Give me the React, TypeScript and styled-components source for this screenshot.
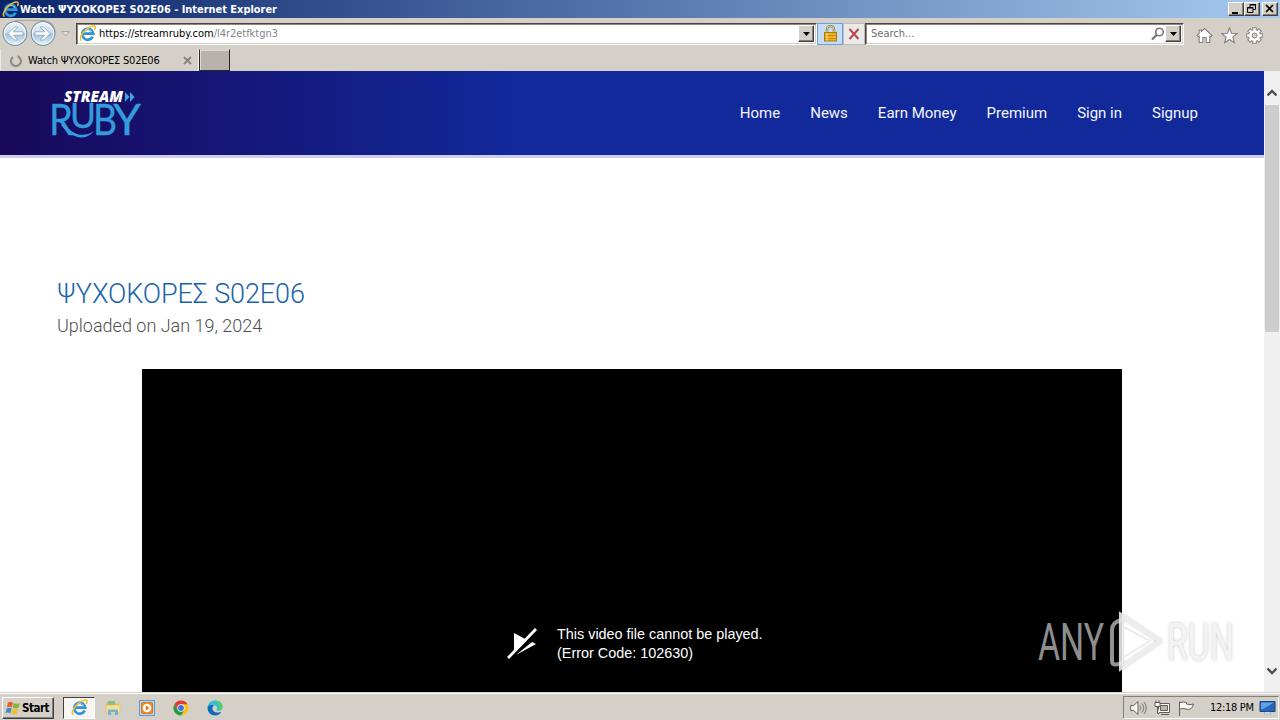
import {useId} from "react";
import styled, {createGlobalStyle, css} from "styled-components";

const navItems = ['Home', 'News', 'Earn Money', 'Premium', 'Sign in', 'Signup']
const title = 'ΨΥΧΟΚΟΡΕΣ S02E06'

const GlobalStyle = createGlobalStyle`
    * {
        box-sizing: border-box;
    }

    body {
        margin: 0;
        overflow: hidden;
    }

    svg {
        display: block;
        flex: none;
    }
`

const raised = css`
    background: #d4d0c8;
    border: 1px solid;
    border-color: #fff #404040 #404040 #fff;
    box-shadow: inset -1px -1px 0 #808080;
`

const Desktop = styled.div`
    position: relative;
    display: flex;
    flex-direction: column;
    width: 1280px;
    height: 720px;
    overflow: hidden;
    background: #d4d0c8;
    color: #000;
    font-family: "DejaVu Sans Condensed", "DejaVu Sans", sans-serif;
    font-size: 11px;
    white-space: nowrap;
`

const TitleBar = styled.div`
    display: flex;
    align-items: center;
    height: 18px;
    padding: 0 2px;
    background: linear-gradient(90deg, #0a246a, #a6caf0);
`

const Caption = styled.span`
    flex: 1;
    color: #fff;
    font-weight: bold;
`

const WindowButton = styled.div<{ $gap?: number }>`
    ${raised};
    width: 16px;
    height: 14px;
    margin-left: ${p => p.$gap ?? 0}px;
`

const Toolbar = styled.div`
    display: flex;
    align-items: center;
    height: 31px;
    padding: 0 7px 0 2px;
    background: #d4d0c8;
`

const Field = styled.div<{ $width: number }>`
    display: flex;
    align-items: center;
    width: ${p => p.$width}px;
    height: 22px;
    padding: 0 2px;
    background: #fff;
    border: 1px solid;
    border-color: #4a443c #fff #fff #4a443c;
    box-shadow: inset 1px 1px 0 #8c867e, inset -1px -1px 0 #d4d0c8;
`

const FieldText = styled.span<{ $muted?: boolean }>`
    flex: 1;
    padding-left: 3px;
    color: ${p => p.$muted ? '#6d6d6d' : '#000'};
    letter-spacing: ${p => p.$muted ? 0 : '-0.03px'};

    em {
        font-style: normal;
        color: #858585;
    }
`

const DropButton = styled.div`
    ${raised};
    display: flex;
    align-items: center;
    justify-content: center;
    width: 16px;
    height: 17px;
`

const SquareButton = styled.div<{ $active?: boolean, $width: number }>`
    display: flex;
    align-items: center;
    justify-content: center;
    width: ${p => p.$width}px;
    height: 22px;
    background: ${p => p.$active ? '#c4dcf6' : '#ebe8e8'};
    border: 1px solid ${p => p.$active ? '#6aa0dc' : '#bdb9b8'};
`

const Commands = styled.div`
    display: flex;
    align-items: center;
    gap: 8px;
    margin: 4px 0 0 12px;
`

const TabStrip = styled.div`
    display: flex;
    height: 22px;
`

const Tab = styled.div`
    display: flex;
    align-items: center;
    width: 199px;
    height: 22px;
    padding: 1px 6px 0 9px;
    border-left: 1px solid #eceae6;
    border-right: 1px solid #f4f2ee;

    span {
        flex: 1;
        padding-left: 6px;
        letter-spacing: -0.2px;
    }
`

const NewTab = styled.div`
    width: 31px;
    height: 22px;
    background: #b9b2ac;
    border: 1px solid #282420;
    border-top-color: #d4d0c8;
    box-shadow: inset 1px 1px 0 #dedad6;
`

const Viewport = styled.div`
    display: flex;
    height: 621px;
`

const Page = styled.main`
    width: 1264px;
    overflow: hidden;
    background: #fff;
    font-family: Roboto, sans-serif;
`

const SiteHeader = styled.header`
    display: flex;
    align-items: center;
    justify-content: space-between;
    height: 84px;
    padding: 0 66px 0 50px;
    background: linear-gradient(90deg, #180958 0, #16106a 120px, #12299c 520px, #12299c 100%);
    box-shadow: 0 3px 0 #cfcdec;
`

const SiteNav = styled.nav`
    display: flex;
    gap: 30px;
    color: #f4f6ff;
    font-size: 15px;
`

const Heading = styled.h1`
    height: 32px;
    margin: 123px 0 0 57px;
    color: #1763ab;
    font-size: 27px;
    font-weight: 300;
    line-height: 32px;
    letter-spacing: -0.1px;
`

const Uploaded = styled.p`
    height: 24px;
    margin: 4px 0 0 57px;
    color: #505050;
    font-size: 18px;
    font-weight: 300;
    line-height: 24px;
`

const Player = styled.div`
    display: flex;
    align-items: flex-start;
    width: 980px;
    height: 323px;
    margin: 31px 0 0 142px;
    padding: 256px 0 0 365px;
    background: #000;
    color: #fff;
    font: 14.4px/19px "Liberation Sans", Arial, sans-serif;

    svg {
        margin: 3px 20px 0 0;
    }
`

const ScrollBar = styled.div`
    display: flex;
    flex-direction: column;
    align-items: center;
    width: 16px;
    padding: 17px 0 16px;
    background: #f0f0f0;
`

const ScrollThumb = styled.div`
    width: 14px;
    height: 227px;
    margin: 7px 0 auto;
    background: #cdcdcd;
`

const Taskbar = styled.footer`
    display: flex;
    align-items: center;
    height: 28px;
    padding: 2px 1px 0 2px;
    background: #d4d0c8;
    border-top: 1px solid #d4d0c8;
    box-shadow: inset 0 1px 0 #fff;
`

const StartButton = styled.div`
    ${raised};
    display: flex;
    align-items: center;
    gap: 1px;
    width: 52px;
    height: 22px;
    padding-left: 2px;
    font-size: 11.5px;
    font-weight: bold;
    letter-spacing: -0.5px;
`

const TaskItem = styled.div<{ $active?: boolean }>`
    display: flex;
    align-items: center;
    justify-content: center;
    width: 32px;
    height: 22px;
    margin-right: 2px;
    ${p => p.$active && css`
        background: #f6f5f3;
        border: 1px solid;
        border-color: #404040 #fff #fff #404040;
    `}
`

const TaskItems = styled.div`
    display: flex;
    flex: 1;
    margin-left: 9px;
`

const Tray = styled.div`
    display: flex;
    align-items: center;
    width: 156px;
    height: 23px;
    padding: 0 2px 0 6px;
    border: 1px solid;
    border-color: #808080 #fff #fff #808080;
`

const Clock = styled.span`
    flex: 1;
    padding-left: 14px;
    letter-spacing: -0.3px;
`

const Watermark = styled.div`
    position: absolute;
    top: 608px;
    left: 1036px;
`

const IeIcon = ({size = 16}: { size?: number }) => (
  <svg width={size} height={size} viewBox="0 0 16 16" fill="none">
    <path d="M12.9 11a5.2 5.2 0 1 1 .5-2.8H4.2" stroke="#2f94d8" strokeWidth="2.6"/>
    <path d="M4.3 6.6a4.2 4.2 0 0 1 7.8 0" stroke="#8fd0f4" strokeWidth=".8"/>
    <path d="M2.2 14.6C-.2 13 2.6 7.6 7 4.1 11.2.7 15.2-.1 15.3 2.2c0 .8-.3 1.6-.8 2.5" stroke="#f2bd2c" strokeWidth="1.4"/>
  </svg>
)

const NavButtons = () => {
  const id = useId()
  return (
    <svg width="74" height="31" viewBox="0 0 74 31">
      <defs>
        <linearGradient id={id} x2="0" y2="1">
          <stop offset="0" stopColor="#eef5fa"/>
          <stop offset=".48" stopColor="#c9dcea"/>
          <stop offset=".52" stopColor="#9fc0da"/>
          <stop offset="1" stopColor="#e6f6fc"/>
        </linearGradient>
      </defs>
      <path d="M13 2.5h28a12 12 0 0 1 12 12" fill="none" stroke="#a8a7a6" strokeWidth="1.2"/>
      {[13, 41].map(x => (
        <g key={x}>
          <circle cx={x} cy="15.5" r="11.8" fill={`url(#${id})`} stroke="#7d94a8" strokeWidth="1.2"/>
          <circle cx={x} cy="15.5" r="10.7" fill="none" stroke="#f8fcff"/>
        </g>
      ))}
      <path d="M6 15.5l6.5-6.5h3.4l-4.7 4.8H21v3.4h-9.8l4.7 4.8h-3.4z" fill="#fff" stroke="#86a2b9" strokeWidth=".8"/>
      <path d="M48 15.5L41.500 9h-3.400l4.700 4.800H33v3.400h9.800l-4.700 4.800h3.400z" fill="#fff" stroke="#86a2b9" strokeWidth=".8"/>
      <path d="M59.500 13.500h8l-4 4.500z" fill="#e1ddd8" stroke="#aaa6a0"/>
    </svg>
  )
}

const DownArrow = () => (
  <svg width="7" height="4" viewBox="0 0 7 4"><path d="M0 0h7L3.500 4z"/></svg>
)

const LockIcon = () => (
  <svg width="15" height="17" viewBox="0 0 15 17">
    <path d="M4 8V4.500a3.500 3.500 0 0 1 7 0V8" fill="none" stroke="#8f7c3a" strokeWidth="2.400"/>
    <path d="M4 8V4.500a3.500 3.500 0 0 1 7 0V8" fill="none" stroke="#eadb9c"/>
    <rect x="1.500" y="7.500" width="12" height="8.500" fill="#eeb320" stroke="#a97a10"/>
    <path d="M2 10.500h11M2 13.500h11" stroke="#c68a10"/>
    <path d="M4 8.500v7" stroke="#fbe08a"/>
  </svg>
)

const StopIcon = () => (
  <svg width="12" height="12" viewBox="0 0 12 12">
    <path d="M1.500 1l9 10M10.500 1l-9 10" stroke="#b7474d" strokeWidth="2"/>
  </svg>
)

const SearchIcon = () => (
  <svg width="14" height="14" viewBox="0 0 14 14" fill="none" stroke="#77777b">
    <circle cx="8.500" cy="5" r="3.800" strokeWidth="1.600"/>
    <path d="M5.700 7.900L1 12.500" strokeWidth="2.300"/>
  </svg>
)

const HomeIcon = () => (
  <svg width="17" height="17" viewBox="0 0 17 17" fill="#fff" stroke="#85817d" strokeWidth="1.100">
    <path d="M8.500 1.500l7.500 7-1.400 1.300-.8-.7v6.400h-3.600v-5H6.800v5H3.200V9.100l-.8.700L1 8.500l2.200-2V3h2.200v1.500z"/>
  </svg>
)

const StarIcon = () => (
  <svg width="17" height="17" viewBox="0 0 17 17" fill="#fff" stroke="#85817d" strokeWidth="1.100">
    <path d="M8.500 1l2 5.300 5.800.2-4.500 3.600 1.600 5.600-4.900-3.200-4.900 3.200 1.600-5.600L.7 6.500l5.800-.2z"/>
  </svg>
)

const GearIcon = () => (
  <svg width="17" height="17" viewBox="0 0 17 17">
    {[0, 45, 90, 135].map(angle => (
      <rect key={angle} x="6.700" y=".7" width="3.600" height="15.600" fill="#fff" stroke="#85817d" transform={`rotate(${angle} 8.500 8.500)`}/>
    ))}
    <circle cx="8.500" cy="8.500" r="5.400" fill="#fff"/>
    <circle cx="8.500" cy="8.500" r="2.500" fill="#d4d0c8" stroke="#85817d"/>
  </svg>
)

const SpinnerIcon = () => (
  <svg width="12" height="12" viewBox="0 0 12 12" fill="none">
    <path d="M7.500 1.300A5 5 0 1 1 3 2" stroke="#8b8884" strokeWidth="2"/>
  </svg>
)

const CloseIcon = () => (
  <svg width="9" height="9" viewBox="0 0 9 9"><path d="M1 1l7 7M8 1L1 8" stroke="#85817d" strokeWidth="1.800"/></svg>
)

const Logo = () => (
  <svg width="92" height="52" viewBox="0 0 92 52">
    <text x="14" y="15" fill="#fff" fontFamily="Open Sans" fontSize="15" fontWeight="800" fontStyle="italic" textLength="59" lengthAdjust="spacingAndGlyphs">STREAM</text>
    <path d="M75 5l4.500 5-4.500 5zM80 5l4.500 5-4.500 5z" fill="#3da5e3"/>
    <g fill="#349bdd" stroke="#349bdd" strokeWidth=".35" fontFamily="Lato" fontSize="43">
      <text x="-1" y="48" textLength="24" lengthAdjust="spacingAndGlyphs">R</text>
      <text x="20" y="41" fontSize="35" textLength="26" lengthAdjust="spacingAndGlyphs">U</text>
      <text x="43" y="48" textLength="24" lengthAdjust="spacingAndGlyphs">B</text>
      <text x="63" y="48" textLength="28" lengthAdjust="spacingAndGlyphs">Y</text>
    </g>
    <path d="M15 38c8 10 18 13 29 6-10 12-23 6-33-6z" fill="#349bdd"/>
  </svg>
)

const BrokenVideoIcon = () => (
  <svg width="30" height="32" viewBox="0 0 30 32" fill="#fff">
    <path d="M7 5l13 7L7 25zM25 14l4 2L9 27z"/>
    <path d="M1 30L29 1" stroke="#fff" strokeWidth="2.800"/>
  </svg>
)

const ScrollArrow = ({down}: { down?: boolean }) => (
  <svg width="10" height="10" viewBox="0 0 10 10" fill="none" stroke="#505050" strokeWidth="2.400">
    <path d={down ? 'M.5 2.500L5 7l4.500-4.500' : 'M.5 7.500L5 3l4.500 4.500'}/>
  </svg>
)

const WindowsFlag = () => (
  <svg width="16" height="16" viewBox="0 0 16 16">
    <path d="M3 2.500Q5.500 1 8 2.700L6.800 7.500Q4.500 6 2 7.300z" fill="#e8612c"/>
    <path d="M8.800 3Q11.500 4.500 15 3L13.500 8Q10.500 9 7.600 7.700z" fill="#85b83a"/>
    <path d="M1.800 8.200Q4.300 7 6.600 8.500L5.300 13.200Q3 11.800.5 13z" fill="#3f8bd0"/>
    <path d="M7.400 8.700Q10 10 13.200 9L11.800 14Q9 15 6.100 13.600z" fill="#f3bd33"/>
  </svg>
)

const FolderIcon = () => (
  <svg width="16" height="16" viewBox="0 0 16 16">
    <path d="M1 2h6l1 1.500h6V12H1z" fill="#e6bd55"/>
    <path d="M3 1h7v4H3z" fill="#7cc08a"/>
    <path d="M1 5h14v8H1z" fill="#f6df91" stroke="#dfbd61" strokeWidth=".6"/>
    <path d="M3 15V9.500h10V15h-3v-3H6v3z" fill="#6fb5dc"/>
  </svg>
)

const MediaIcon = () => (
  <svg width="16" height="16" viewBox="0 0 16 16">
    <rect x=".5" y=".5" width="15" height="15" fill="#b9daf0" stroke="#5d9bce"/>
    <rect x="2.500" y="2.500" width="11" height="11" rx="1" fill="#f38b1d" stroke="#d9731a"/>
    <circle cx="8" cy="8" r="4.300" fill="#fff"/>
    <path d="M6.700 5.300L10.500 8l-3.800 2.700z" fill="#e97818"/>
  </svg>
)

const ChromeIcon = () => (
  <svg width="16" height="16" viewBox="0 0 16 16">
    <circle cx="8" cy="8" r="7.500" fill="#fbc116"/>
    <path d="M1.500 4.250A7.500 7.500 0 0 1 14.500 4.250H8L4.750 9.900z" fill="#e33b2e"/>
    <path d="M1.500 4.250A7.500 7.500 0 0 0 8 15.500l3.250-5.600H4.750z" fill="#269847"/>
    <circle cx="8" cy="8" r="3.700" fill="#fff"/>
    <circle cx="8" cy="8" r="2.900" fill="#3974dc"/>
  </svg>
)

const EdgeIcon = () => (
  <svg width="16" height="16" viewBox="0 0 16 16">
    <path d="M.5 8C.3 3.500 4 .5 8 .5c5 0 7.500 3.500 7.500 6.200 0 3-2.500 4-4.300 4-2 0-2.200-.8-1.500-1.500.8-1 .4-3.700-2.500-3.700C4 5.500.8 6.500.5 8z" fill="#36bfd0"/>
    <path d="M8 .5c5 0 7.500 3.500 7.500 6.200 0 3-2.500 4-4.300 4C12.500 5 11 3 8 .5z" fill="#54ca72"/>
    <path d="M.5 8c.3-3 4-3.800 6.500-2.400C4.300 7 5 12.300 10 12.600c2 .1 3.500-.6 4.300-.9-1.500 2.500-3.500 3.800-6.300 3.800C4 15.500.5 12.500.5 8z" fill="#1268bc"/>
  </svg>
)

const TrayIcons = () => (
  <svg width="66" height="18" viewBox="0 0 66 18">
    <g fill="#f8f7f5" stroke="#625e5a">
      <path d="M.7 6.500h3L8 2.500v13l-4.300-4h-3z"/>
      <path d="M10 6.500q1.800 2.500 0 5M12 4.500q3.500 4.500 0 9M14 3q4.500 6 0 12" fill="none" strokeWidth=".8"/>
      <path d="M28.500 4.500h11v9h-11zM31 15.500h8" />
      <path d="M30.500 6.500h7v5h-7z" fill="#bcb8b4"/>
      <path d="M25 3.500h5v4h-5zM26 3.500v-2M29 3.500v-2M27.500 7.500v7h2"/>
      <path d="M49.500 17V2.500M50 3.500q3-1 6.500 0v1.500q3.500 1.200 7 0-.5 3-3 5-2 1-4.500 0-3-1-6 0"/>
    </g>
  </svg>
)

const MonitorIcon = () => (
  <svg width="17" height="15" viewBox="0 0 17 15">
    <path d="M1 1.500h15v10H1z" fill="#2567bd" stroke="#1c3f7d"/>
    <path d="M2 2.500h13L4 9H2z" fill="#5fa2e8"/>
    <path d="M6 12h5l1 2H5z" fill="#e9eef6" stroke="#7084a0" strokeWidth=".5"/>
  </svg>
)

const WatermarkArt = () => {
  const id = useId()
  return (
    <svg width="204" height="70" viewBox="0 0 204 70">
      <defs>
        <filter id={id} x="-10%" y="-10%" width="120%" height="120%">
          <feDropShadow dx="0" dy="0" stdDeviation="1.500" floodColor="#777" floodOpacity=".45"/>
        </filter>
      </defs>
      <g fontFamily="Roboto" fontSize="51" fontWeight="400">
        <text x="2" y="52" fill="#8d8d8d" textLength="66" lengthAdjust="spacingAndGlyphs">ANY</text>
        <text x="131" y="52" fill="#f3f3f3" filter={`url(#${id})`} textLength="67" lengthAdjust="spacingAndGlyphs">RUN</text>
      </g>
      <g fill="none" strokeWidth="4">
        <path d="M86 12q-10 2-10 10v31q0 6 10 2" stroke="#929292"/>
        <path d="M85 7v53l39-27z" stroke="#eee" strokeOpacity=".85" filter={`url(#${id})`}/>
        <path d="M86 18l28 15-28 17" stroke="#e8e8e8" strokeOpacity=".8" strokeWidth="2"/>
      </g>
    </svg>
  )
}

const App = () => {
  return (
    <Desktop>
      <GlobalStyle/>
      <TitleBar>
        <IeIcon size={17}/>
        <Caption>
          <svg width="262" height="16">
            <text x="1" y="11.500" fill="#fff" textLength="257" lengthAdjust="spacingAndGlyphs">Watch {title} - Internet Explorer</text>
          </svg>
        </Caption>
        <WindowButton><svg width="14" height="12"><path d="M3 9h6v2H3z"/></svg></WindowButton>
        <WindowButton>
          <svg width="14" height="12" fill="none" stroke="#000">
            <path d="M5 4V1.500h5.500v5H8M5 2h6M2.500 4.500H8v5H2.500zM2 5h6"/>
          </svg>
        </WindowButton>
        <WindowButton $gap={2}>
          <svg width="14" height="12"><path d="M3 2l7 7M10 2L3 9" stroke="#000" strokeWidth="1.700"/></svg>
        </WindowButton>
      </TitleBar>
      <Toolbar>
        <NavButtons/>
        <Field $width={741}>
          <IeIcon size={17}/>
          <FieldText>https://streamruby.com<em>/l4r2etfktgn3</em></FieldText>
          <DropButton><DownArrow/></DropButton>
        </Field>
        <SquareButton $active $width={26}><LockIcon/></SquareButton>
        <SquareButton $width={22} style={undefined}><StopIcon/></SquareButton>
        <Field $width={319}>
          <FieldText $muted>Search...</FieldText>
          <SearchIcon/>
          <DropButton><DownArrow/></DropButton>
        </Field>
        <Commands>
          <HomeIcon/>
          <StarIcon/>
          <GearIcon/>
        </Commands>
      </Toolbar>
      <TabStrip>
        <Tab>
          <SpinnerIcon/>
          <span>Watch {title}</span>
          <CloseIcon/>
        </Tab>
        <NewTab/>
      </TabStrip>
      <Viewport>
        <Page>
          <SiteHeader>
            <Logo/>
            <SiteNav>
              {navItems.map(item => <span key={item}>{item}</span>)}
            </SiteNav>
          </SiteHeader>
          <Heading>{title}</Heading>
          <Uploaded>Uploaded on Jan 19, 2024</Uploaded>
          <Player>
            <BrokenVideoIcon/>
            <div>This video file cannot be played.<br/>(Error Code: 102630)</div>
          </Player>
        </Page>
        <ScrollBar>
          <ScrollArrow/>
          <ScrollThumb/>
          <ScrollArrow down/>
        </ScrollBar>
      </Viewport>
      <Taskbar>
        <StartButton><WindowsFlag/>Start</StartButton>
        <TaskItems>
          <TaskItem $active><IeIcon size={17}/></TaskItem>
          <TaskItem><FolderIcon/></TaskItem>
          <TaskItem><MediaIcon/></TaskItem>
          <TaskItem><ChromeIcon/></TaskItem>
          <TaskItem><EdgeIcon/></TaskItem>
        </TaskItems>
        <Tray>
          <TrayIcons/>
          <Clock>12:18 PM</Clock>
          <MonitorIcon/>
        </Tray>
      </Taskbar>
      <Watermark><WatermarkArt/></Watermark>
    </Desktop>
  );
};

export default App;
